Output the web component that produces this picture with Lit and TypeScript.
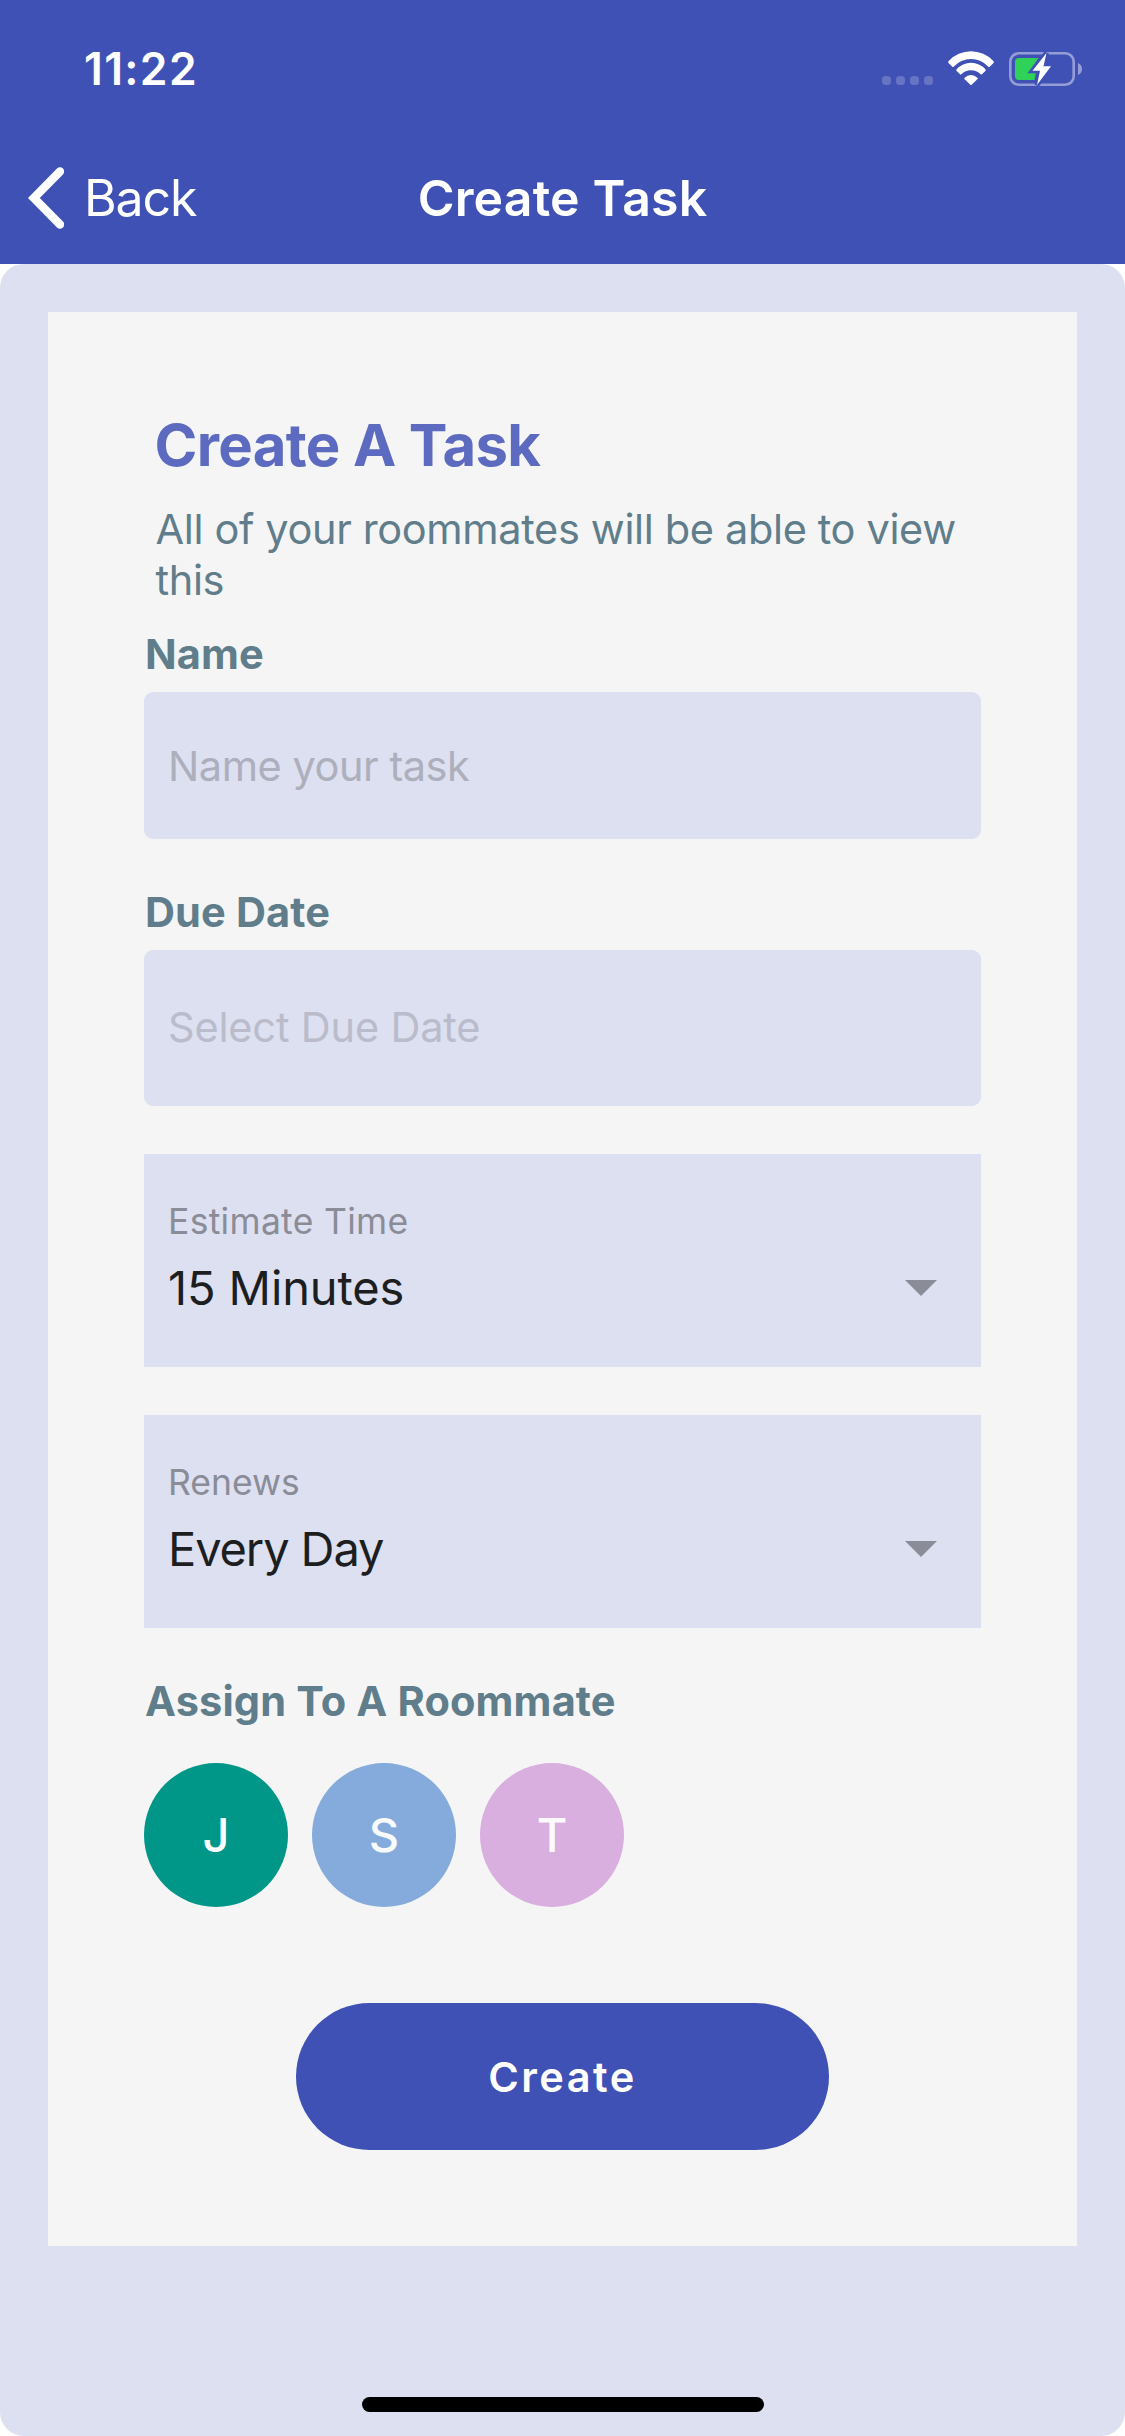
import { LitElement, html, css } from "lit";
import { customElement, property } from "lit/decorators.js";
import { styleMap } from "lit/directives/style-map.js";

const FONT = css`Inter, Roboto, "Liberation Sans", sans-serif`;

@customElement("status-bar")
class StatusBar extends LitElement {
  static styles = css`
    :host { display: flex; justify-content: space-between; height: 132px; box-sizing: border-box; padding: 0 43px 0 84px; color: #fff; }
    .time { font: 600 44.500px/66px ${FONT}; margin-top: 36px; letter-spacing: 1.35px; }
    .icons { display: flex; align-items: flex-start; padding-top: 52px; }
    .dots { display: flex; gap: 5px; margin: 24px 15px 0 0; }
    .dot { width: 9px; height: 9px; border-radius: 3.5px; background: #6774c4; }
    .wifi { width: 46px; height: 33px; margin-right: 15px; }
    .battery { width: 73px; height: 34px; }
    svg { display: block; overflow: visible; }
  `;
  render() {
    return html`
      <div class="time">11:22</div>
      <div class="icons">
        <div class="dots">${[0, 1, 2, 3].map(() => html`<span class="dot"></span>`)}</div>
        <svg class="wifi" viewBox="0 0 138 99" fill="#fff">
          <path d="M2 27A92 92 0 0 1 136 27Q139 30 136.500 33L125 44Q123 45.500 121 44A70 70 0 0 0 17 44Q15 45.500 13 44L1.500 33Q-1 30 2 27Z" />
          <path d="M26 51.500A58 58 0 0 1 112 51.500Q115 54 112 57L102 66.500Q100 68 98 66.500A41 41 0 0 0 40 66.500Q38 68 36 66.500L26 57Q23 54 26 51.500Z" />
          <path d="M50 77A27 27 0 0 1 88 77Q91 79.500 88 82L71 98Q69 100 67 98L50 82Q47 79.500 50 77Z" />
        </svg>
        <svg class="battery" viewBox="0 0 73 34">
          <rect x="1.300" y="1.300" width="63.400" height="31.400" rx="8.500" fill="none" stroke="#959dd6" stroke-width="2.600" />
          <path d="M69 11V23C71.500 22 73 19.700 73 17S71.500 12 69 11Z" fill="#959dd6" />
          <path d="M10 6H29.500L19.500 20.500H27L25.500 28H10Q6 28 6 24V10Q6 6 10 6Z" fill="#30d158" />
          <path d="M37.500 1L23.500 18.700H31L28 33L42 14.300H34.500Z" fill="#fff" stroke="#3f51b5" stroke-width="5" />
          <path d="M37.500 1L23.500 18.700H31L28 33L42 14.300H34.500Z" fill="#fff" />
        </svg>
      </div>
    `;
  }
}

@customElement("nav-bar")
class NavBar extends LitElement {
  static styles = css`
    :host { display: grid; grid-template-columns: 1fr auto 1fr; align-items: center; height: 132px; color: #fff; }
    .back { display: flex; align-items: center; padding-left: 28px; gap: 20px; font: 400 50px/60px ${FONT}; letter-spacing: -1.1px; }
    .chevron { display: block; width: 36px; height: 62px; }
    .title { font: 600 50px/60px ${FONT}; letter-spacing: 0.18px; }
  `;
  render() {
    return html`
      <div class="back">
        <svg class="chevron" viewBox="0 0 36 62"><path d="M32 4.500L5.800 31L32 57.500" fill="none" stroke="#fff" stroke-width="8.400" stroke-linecap="round" /></svg>
        <span>Back</span>
      </div>
      <div class="title">Create Task</div>
    `;
  }
}

@customElement("select-field")
class SelectField extends LitElement {
  @property() label = "";
  @property() value = "";
  static styles = css`
    :host { display: flex; justify-content: space-between; box-sizing: border-box; height: 213px; margin-top: 48px; padding: 46px 44px 0 24px; background: #dde0f1; }
    .label { font: 400 35.500px/44px ${FONT}; color: #8a8c97; letter-spacing: 0.3px; }
    .value { font: 400 47px/58px ${FONT}; color: #1c1e1f; margin-top: 15px; letter-spacing: -0.12px; }
    :host([tight]) .label { letter-spacing: 0; }
    :host([tight]) .value { letter-spacing: -1.1px; }
    .arrow { display: block; width: 32px; height: 16px; margin-top: 80px; }
  `;
  render() {
    return html`
      <div>
        <div class="label">${this.label}</div>
        <div class="value">${this.value}</div>
      </div>
      <svg class="arrow" viewBox="0 0 32 16"><path d="M0 0H32L16 16Z" fill="#8a8c97" /></svg>
    `;
  }
}

@customElement("app-root")
class AppRoot extends LitElement {
  private roommates = [
    { initial: "J", color: "#009688", text: "#ffffff" },
    { initial: "S", color: "#84abdb", text: "#f9fafc" },
    { initial: "T", color: "#d8afdf", text: "#fcfafd" },
  ];
  static styles = css`
    :host { display: block; width: 1125px; height: 2436px; background: #fff; font-family: ${FONT}; }
    .screen { display: flex; flex-direction: column; height: 2436px; }
    .header { background: #3f51b5; height: 264px; }
    .body { flex: 1; display: flex; flex-direction: column; justify-content: space-between; align-items: center; box-sizing: border-box; padding: 48px 48px 24px; border-radius: 24px; background: #dde0f1; }
    .card { box-sizing: border-box; width: 1029px; height: 1934px; padding: 103px 96px 96px; background: #f5f5f5; }
    .title { font-size: 58px; line-height: 60px; font-weight: 700; color: #5c6bc0; padding-left: 10.500px; letter-spacing: -0.64px; }
    .subtitle { font-size: 41.500px; line-height: 51px; color: #607d8b; padding-left: 11.500px; margin-top: 29px; letter-spacing: -0.36px; white-space: nowrap; }
    .label { font-size: 41.500px; line-height: 50px; font-weight: 700; color: #607d8b; margin-top: 48px; padding-left: 1px; letter-spacing: 0.15px; }
    .label.first { margin-top: 23px; }
    .input { display: flex; align-items: center; box-sizing: border-box; height: 147px; margin-top: 13px; padding: 0 24px; border-radius: 9px; background: #dde0f1; font-size: 41.500px; color: #aeafbc; letter-spacing: -0.46px; }
    .input.date { height: 156px; padding-bottom: 2px; color: #babccb; letter-spacing: -0.18px; }
    .people { display: flex; gap: 24px; margin-top: 37px; }
    .avatar { width: 144px; height: 144px; box-sizing: border-box; padding-bottom: 2px; border-radius: 50%; display: flex; align-items: center; justify-content: center; font-size: 47px; font-weight: 500; }
    .create { display: flex; align-items: center; justify-content: center; width: 533px; height: 147px; margin: 96px auto 0; border-radius: 73.500px; background: #3f51b5; color: #fff; font-size: 41.500px; font-weight: 600; letter-spacing: 2.47px; }
    .home { width: 402px; height: 15px; border-radius: 7.500px; background: #000; }
  `;
  render() {
    return html`
      <div class="screen">
        <div class="header">
          <status-bar></status-bar>
          <nav-bar></nav-bar>
        </div>
        <div class="body">
          <div class="card">
            <div class="title">Create A Task</div>
            <div class="subtitle">All of your roommates will be able to view<br />this</div>
            <div class="label first">Name</div>
            <div class="input">Name your task</div>
            <div class="label">Due Date</div>
            <div class="input date">Select Due Date</div>
            <select-field label="Estimate Time" value="15 Minutes"></select-field>
            <select-field tight label="Renews" value="Every Day"></select-field>
            <div class="label">Assign To A Roommate</div>
            <div class="people">
              ${this.roommates.map(
                (r) => html`<div class="avatar" style=${styleMap({ background: r.color, color: r.text })}>${r.initial}</div>`
              )}
            </div>
            <div class="create">Create</div>
          </div>
          <div class="home"></div>
        </div>
      </div>
    `;
  }
}
